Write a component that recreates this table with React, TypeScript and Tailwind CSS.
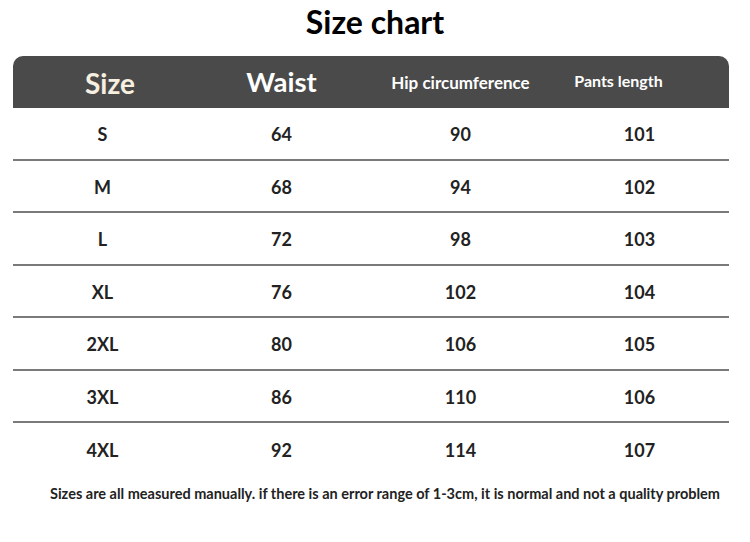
const rows = [
  ["S", "64", "90", "101"],
  ["M", "68", "94", "102"],
  ["L", "72", "98", "103"],
  ["XL", "76", "102", "104"],
  ["2XL", "80", "106", "105"],
  ["3XL", "86", "110", "106"],
  ["4XL", "92", "114", "107"],
];

export default function App() {
  return (
    <main className="w-[750px] h-[542px] bg-white font-['Lato','Liberation_Sans',sans-serif] overflow-hidden">
      <h1 className="pt-[3px] text-center text-[32px] font-bold leading-[38px] text-black">Size chart</h1>

      <div className="ml-[13px] mt-[15px] w-[716px]">
        {/* header bar */}
        <div className="grid h-[52px] grid-cols-4 items-center rounded-t-[10px] bg-[#4a4a4a]">
          <span className="pl-[15px] pt-[2px] text-center text-[28px] font-bold text-[#f7f0e1]">Size</span>
          <span className="text-center text-[27.5px] font-bold text-white">Waist</span>
          <span className="pt-[2px] text-center text-[17px] font-bold text-white">Hip circumference</span>
          <span className="mb-[2px] pr-[42px] text-center text-[16px] font-bold text-white">Pants length</span>
        </div>

        {rows.map((r, i) => (
          <div
            key={r[0]}
            className={`grid h-[52.5px] grid-cols-4 items-center pt-[3px] text-[18px] font-bold text-[#222] ${
              i < rows.length - 1 ? "border-b-2 border-[#7a7a7a]" : ""
            }`}
          >
            {r.map((c, j) => (
              <span key={j} className="text-center">
                {c}
              </span>
            ))}
          </div>
        ))}
      </div>

      <p className="mt-[7px] pl-[50px] text-[14.5px] font-bold text-[#222]">
        Sizes are all measured manually. if there is an error range of 1-3cm, it is normal and not a quality problem
      </p>
    </main>
  );
}
